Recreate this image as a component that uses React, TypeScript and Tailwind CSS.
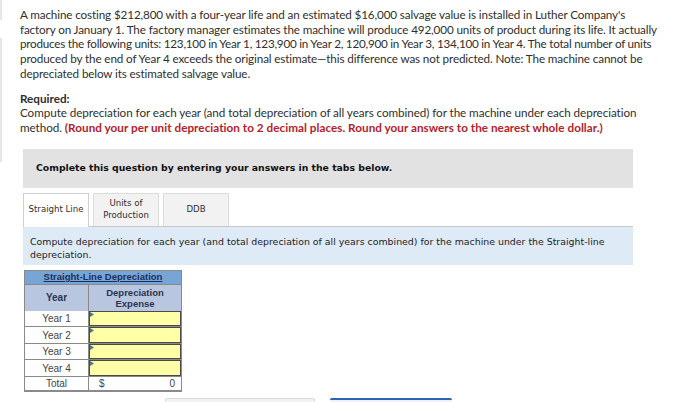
import React from 'react'

const ROWS = ['Year 1', 'Year 2', 'Year 3', 'Year 4']

const TABS: [string, React.ReactNode][] = [
  ['sl', 'Straight Line'],
  ['up', (<>Units of<br />Production</>)],
  ['ddb', 'DDB'],
]

export default function App() {
  return (
    <div className="relative w-[700px] h-[402px] overflow-hidden bg-white text-[#2f2f2f]">
      {/* faint edge of the sidebar */}
      <div className="absolute left-0 top-0 w-[2px] h-[20px] bg-[#e6e6e6]" />
      <div className="absolute left-0 top-[38px] w-[2px] h-[124px] bg-[#e6e6e6]" />

      <div className="pl-[20px] pt-[7px]" style={{ fontFamily: 'Lato, "Open Sans", sans-serif' }}>
        <p className="text-[11.7px] leading-[14.7px] tracking-[-0.13px]">
          A machine costing $212,800 with a four-year life and an estimated $16,000 salvage value is installed in Luther Company's<br />
          factory on January 1. The factory manager estimates the machine will produce 492,000 units of product during its life. It actually<br />
          <span className="tracking-[-0.24px]">produces the following units: 123,100 in Year 1, 123,900 in Year 2, 120,900 in Year 3, 134,100 in Year 4. The total number of units</span><br />
          produced by the end of Year 4 exceeds the original estimate—this difference was not predicted. Note: The machine cannot be<br />
          depreciated below its estimated salvage value.
        </p>
        <p className="mt-[10px] text-[11.7px] leading-[14.7px] font-bold">Required:</p>
        <p className="text-[11.7px] leading-[14.7px] tracking-[-0.07px]">
          Compute depreciation for each year (and total depreciation of all years combined) for the machine under each depreciation<br />
          method. <span className="font-bold text-[#b3222b] tracking-[0.04px]">(Round your per unit depreciation to 2 decimal places. Round your answers to the nearest whole dollar.)</span>
        </p>
      </div>

      <div className="ml-[23px] w-[610px]" style={{ fontFamily: '"DejaVu Sans", Verdana, sans-serif' }}>
        <div className="mt-[14px] h-[39px] bg-[#e2e2e2] flex items-center pl-[13px] text-[9.3px] font-bold text-[#111]">
          Complete this question by entering your answers in the tabs below.
        </div>

        <div className="mt-[5px] flex gap-[4px] items-end h-[33px]">
          {TABS.map(([k, l], i) => (
            <div
              key={k}
              className={`w-[66px] h-[33px] flex items-center justify-center text-center text-[8.6px] leading-[11.5px] border border-b-0 ${
                i === 0 ? 'bg-white border-[#cfcfcf] relative top-[1px] h-[34px]' : 'bg-[#f2f2f2] border-[#dcdcdc]'
              }`}
            >
              {l}
            </div>
          ))}
        </div>

        <div className="h-[39px] bg-[#deebf7] border-t border-[#c8c8c8] px-[7px] pt-[8px] text-[9.4px] leading-[13px] text-[#222]">
          Compute depreciation for each year (and total depreciation of all years combined) for the machine under the Straight-line<br />
          depreciation.
        </div>

        <div className="mt-[5px] ml-[1px] w-[158px]" style={{ fontFamily: '"Liberation Sans", Arial, sans-serif' }}>
          <div className="h-[15px] bg-[#76a5d6] border border-[#8a8a8a] flex items-center justify-center text-[9.5px] font-bold text-[#1d2f5a] underline">
            Straight-Line Depreciation
          </div>
          <div className="flex h-[26px] bg-[#b9c6df] border-x border-[#8a8a8a] text-[9.5px] font-bold text-[#2a3550]">
            <div className="w-[64px] flex items-center justify-center border-r border-[#8a8a8a] text-[10px]">Year</div>
            <div className="flex-1 flex items-center justify-center text-center leading-[11px]">
              Depreciation<br />Expense
            </div>
          </div>
          {ROWS.map((r) => (
            <div key={r} className="flex h-[16.6px] border-x border-b border-[#8a8a8a] first:border-t text-[10px]">
              <div className="w-[64px] flex items-center justify-center bg-white text-[#444] border-r border-[#8a8a8a]">{r}</div>
              <div className="relative flex-1 bg-[#ffffa8] border border-[#4a4a4a]">
                <svg className="absolute left-0 top-0" width="4" height="5" viewBox="0 0 4 5">
                  <path d="M0 0 L4 2.5 L0 5 Z" fill="#4a7a8a" />
                </svg>
              </div>
            </div>
          ))}
          <div className="flex h-[15px] border-x border-b-2 border-[#8a8a8a] text-[10px]">
            <div className="w-[64px] flex items-center justify-center bg-white text-[#444] border-r border-[#8a8a8a]">Total</div>
            <div className="flex-1 flex items-center justify-between px-[10px] pr-[6px] bg-white text-[#444]">
              <span>$</span>
              <span>0</span>
            </div>
          </div>
        </div>
      </div>

      {/* bottom nav buttons peeking in */}
      <div className="absolute left-[165px] top-[398px] flex gap-[15px]">
        <div className="w-[150px] h-[10px] bg-[#f0f2f6] border border-[#d8dbe3] rounded-[2px]" />
        <div className="w-[122px] h-[10px] bg-[#eef3fb] border-t-2 border-[#2c64b0] rounded-[2px]" />
      </div>
    </div>
  )
}
